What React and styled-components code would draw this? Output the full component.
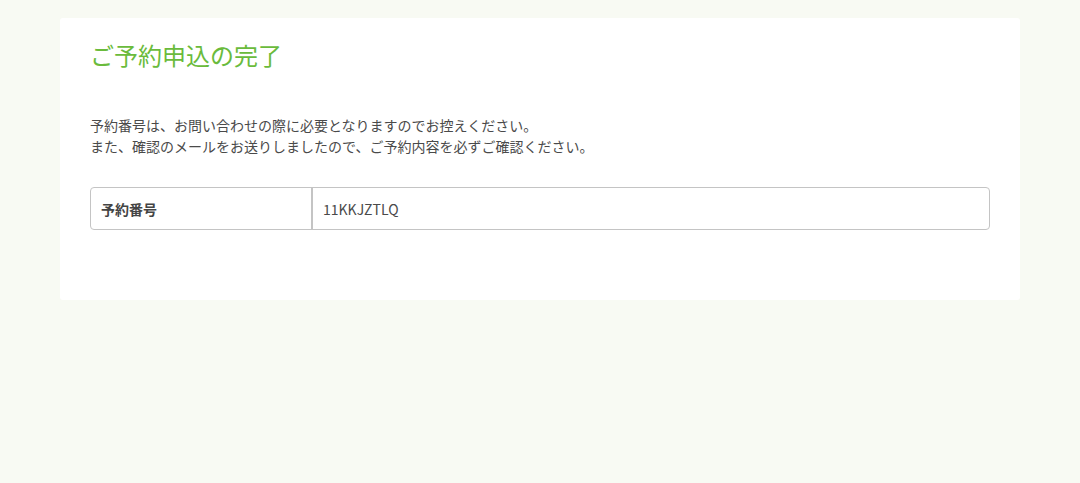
import React from 'react';
import styled, {createGlobalStyle} from "styled-components";

const GlobalStyle = createGlobalStyle`
  html, body {
    margin: 0;
    padding: 0;
    background: #f8faf3;
  }
  body {
    font-family: "Noto Sans CJK JP", "Noto Sans", sans-serif;
    color: #444;
  }
`

export default function App () {
    return (
      <Page>
          <GlobalStyle/>
          <Card>
              <Title>ご予約申込の完了</Title>
              <Message>
                  予約番号は、お問い合わせの際に必要となりますのでお控えください。<br/>
                  また、確認のメールをお送りしましたので、ご予約内容を必ずご確認ください。
              </Message>
              <InfoTable>
                  <tbody>
                  <tr>
                      <th>予約番号</th>
                      <td>11KKJZTLQ</td>
                  </tr>
                  </tbody>
              </InfoTable>
          </Card>
      </Page>
    );
}

const Page = styled.div`
  padding: 18px 60px;
`

const Card = styled.section`
  background-color: #fff;
  border-radius: 3px;
  padding: 19px 30px 70px;
`

const Title = styled.h1`
  margin: 0;
  font-size: 24px;
  font-weight: 400;
  line-height: 1.5;
  color: #6abb3c;
`

const Message = styled.p`
  margin: 42px 0 0;
  font-size: 14px;
  line-height: 21px;
  color: #4a4a4a;
`

const InfoTable = styled.table`
  width: 100%;
  margin-top: 30px;
  border-collapse: separate;
  border-spacing: 0;
  border: 1px solid #c4c4c4;
  border-radius: 4px;
  font-size: 14px;

  th, td {
    height: 41px;
    padding: 0 10px;
    text-align: left;
    vertical-align: middle;
  }

  th {
    width: 200px;
    font-weight: 700;
    color: #444;
    border-right: 2px solid #c4c4c4;
  }

  td {
    color: #4a4a4a;
  }
`
